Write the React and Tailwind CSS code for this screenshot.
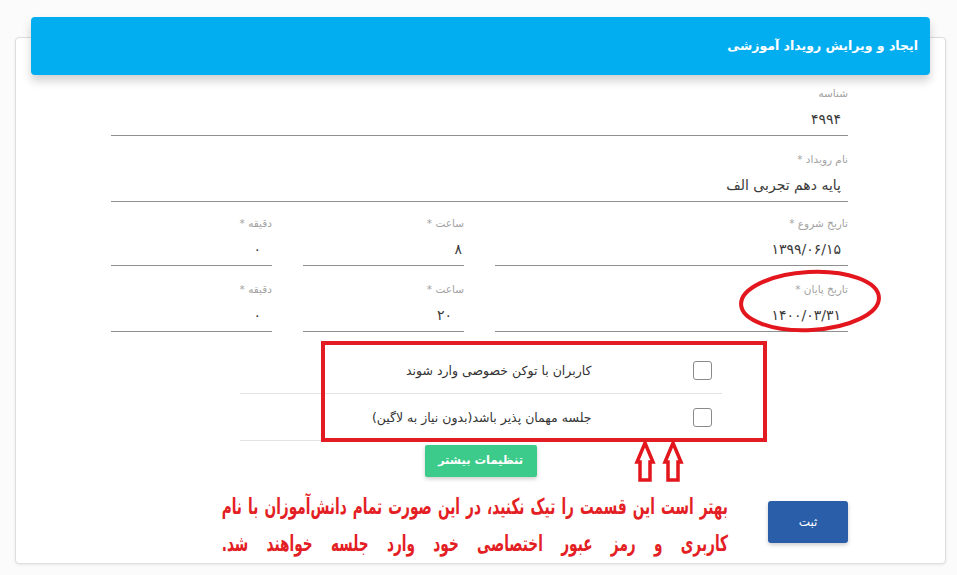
import React from "react";

const F = { fontFamily: '"DejaVu Sans", "Noto Sans", sans-serif' };

function Field({ label, value, className = "", valuePad = "pr-[7px]", pt = "pt-[17px]" }) {
  return (
    <div className={`flex flex-col border-b border-[#8f8f8f] ${pt} ${className}`}>
      <div className="text-[10.5px] leading-[14px] text-[#a3a3a3]">{label}</div>
      <div className={`mt-[8px] mb-[5px] text-[14px] leading-[22px] text-[#3a3a3a] ${valuePad}`}>{value}</div>
    </div>
  );
}

function CheckRow({ text }) {
  return (
    <div className="flex h-[47px] items-center border-b border-[#e3e3e3]">
      <div className="mr-[10px] h-[19px] w-[19px] rounded-[3px] border border-[#8a8a8a] bg-white" />
      <div className="mr-[101px] mt-[3px] text-[12.5px] text-[#333]">{text}</div>
    </div>
  );
}

function Arrow({ x }) {
  return (
    <polygon
      points={`${x},3 ${x + 8},22 ${x + 5},22 ${x + 5},40 ${x - 5},40 ${x - 5},22 ${x - 8},22`}
      fill="white"
      stroke="#e3161e"
      strokeWidth="3.5"
      strokeLinejoin="miter"
    />
  );
}

export default function App() {
  return (
    <div dir="rtl" style={F} className="relative h-[575px] w-[957px] overflow-hidden bg-[#fbfbfb] pl-[15px] pr-[11px] pt-[37px]">
      <div className="flex h-[527px] flex-col rounded-[4px] border border-[#dedede] bg-white shadow-[0_1px_3px_rgba(0,0,0,0.08)]">
        <div className="mx-[15px] -mt-[21px] flex h-[58px] items-center rounded-[4px] bg-[#02aeef] pr-[12px] text-[12.5px] font-bold text-white shadow-[0_6px_10px_rgba(0,0,0,0.18)]">
          ایجاد و ویرایش رویداد آموزشی
        </div>
        <div className="flex flex-col pl-[95px] pr-[97px]">
          <Field label="شناسه" value="۴۹۹۴" pt="pt-[11px]" />
          <Field label="نام رویداد *" value="پایه دهم تجربی الف" pt="pt-[16px]" />
          <div className="flex gap-[31px]">
            <Field label="تاریخ شروع *" value="۱۳۹۹/۰۶/۱۵" className="w-[353px]" pt="pt-[14px]" />
            <Field label="ساعت *" value="۸" className="w-[161px]" valuePad="pr-[2px]" pt="pt-[14px]" />
            <Field label="دقیقه *" value="۰" className="w-[161px]" valuePad="pr-[11px]" pt="pt-[14px]" />
          </div>
          <div className="flex gap-[31px]">
            <Field label="تاریخ پایان *" value="۱۴۰۰/۰۳/۳۱" className="w-[353px]" pt="pt-[16px]" />
            <Field label="ساعت *" value="۲۰" className="w-[161px]" valuePad="pr-[12px]" pt="pt-[16px]" />
            <Field label="دقیقه *" value="۰" className="w-[161px]" valuePad="pr-[11px]" pt="pt-[16px]" />
          </div>
        </div>
        <div className="mx-auto mt-[15px] flex w-[482px] flex-col">
          <CheckRow text="کاربران با توکن خصوصی وارد شوند" />
          <CheckRow text="جلسه مهمان پذیر باشد(بدون نیاز به لاگین)" />
          <button className="mx-auto mt-[4px] flex h-[32px] w-[112px] items-center justify-center rounded-[2px] bg-[#3ccb8a] text-[11.5px] font-bold text-white shadow-[0_2px_4px_rgba(0,0,0,0.2)]">
            تنظیمات بیشتر
          </button>
        </div>
        <div className="mt-[24px] flex pr-[97px]">
          <button className="flex h-[42px] w-[80px] items-center justify-center rounded-[3px] bg-[#2a5ea8] text-[12px] text-white shadow-[0_2px_4px_rgba(0,0,0,0.2)]">
            ثبت
          </button>
        </div>
      </div>

      {/* annotations */}
      <svg className="absolute left-[737px] top-[268px]" width="146" height="66" viewBox="0 0 146 66">
        <ellipse cx="73" cy="33" rx="69" ry="29" fill="none" stroke="#e3161e" strokeWidth="4" transform="rotate(-3 73 33)" />
      </svg>
      <div className="absolute left-[321px] top-[341px] h-[101px] w-[446px] border-[4px] border-[#e31b23]" />
      <svg className="absolute left-[628px] top-[440px]" width="60" height="44" viewBox="0 0 60 44">
        <Arrow x={17} />
        <Arrow x={45} />
      </svg>
      <div className="absolute right-[229px] top-[488px] flex w-[814px] origin-right scale-x-[0.622] flex-col whitespace-nowrap text-[22px] font-bold leading-[37px] text-[#e31e24]">
        <div className="[text-align-last:justify]">بهتر است این قسمت را تیک نکنید، در این صورت تمام دانش‌آموزان با نام</div>
        <div className="[text-align-last:justify]">کاربری و رمز عبور اختصاصی خود وارد جلسه خواهند شد.</div>
      </div>
    </div>
  );
}
